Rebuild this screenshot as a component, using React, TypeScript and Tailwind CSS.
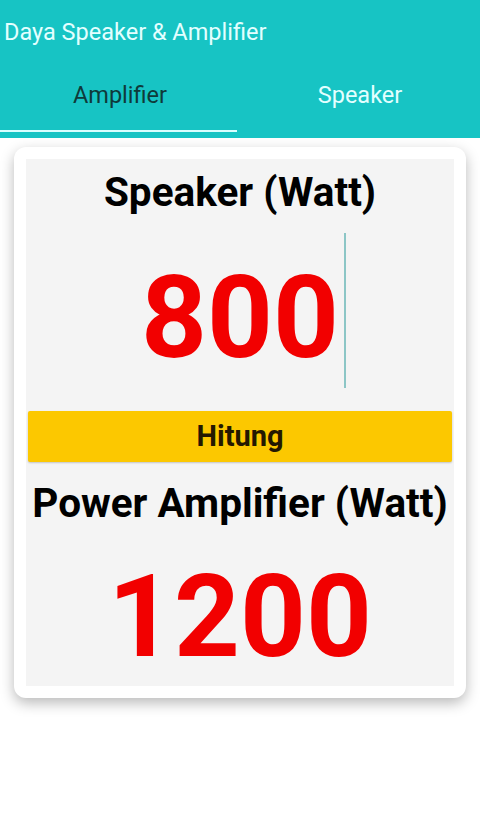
import { useState } from 'react'

const font = { fontFamily: 'Roboto, "Noto Sans", sans-serif' }

export default function App() {
  const [tab, setTab] = useState<'amp' | 'spk'>('amp')
  const [speaker] = useState('800')
  const result = String(Math.round(Number(speaker) * 1.5))

  return (
    <div className="min-h-[816px] w-[480px] bg-white" style={font}>
      <header className="h-[138px] bg-[#17c4c4]">
        <div className="flex h-[64px] items-center px-1 pt-[1px]">
          <h1 className="text-[23.5px] font-normal text-[#e3ffff]">Daya Speaker &amp; Amplifier</h1>
        </div>
        <nav className="flex h-[74px] flex-col">
          <div className="flex h-[66px]">
            <button type="button" onClick={() => setTab('amp')} className={`flex flex-1 items-center justify-center pb-[3px] text-[23.5px] ${tab === 'amp' ? 'text-[#0f3a3a]' : 'text-[#e3ffff]'}`}>
              Amplifier
            </button>
            <button type="button" onClick={() => setTab('spk')} className={`flex flex-1 items-center justify-center pb-[3px] text-[23.5px] ${tab === 'spk' ? 'text-[#0f3a3a]' : 'text-[#e3ffff]'}`}>
              Speaker
            </button>
          </div>
          <div className="flex">
            <div className={`h-[2px] w-[237px] ${tab === 'amp' ? 'bg-[#d9ffff]' : 'bg-transparent'}`} />
            <div className={`h-[2px] w-[237px] ${tab === 'spk' ? 'bg-[#d9ffff]' : 'bg-transparent'}`} />
          </div>
        </nav>
      </header>

      <main className="px-[14px] pt-[9px]">
        <div className="rounded-[12px] bg-white p-[12px] shadow-[0_5px_14px_rgba(0,0,0,0.28)]">
          <section className="flex h-[527px] flex-col items-center bg-[#f4f4f4] px-[2px]">
            <h2 className="mt-[11px] text-[40.5px] leading-[44px] font-bold text-black">Speaker (Watt)</h2>
            <div className="mt-[23px] flex h-[155px] items-center justify-center pt-[6px]">
              <span className="relative text-[115px] leading-[120px] font-bold text-[#f20000]">
                {speaker}
                <span className="absolute top-[-25px] left-[calc(100%+5px)] h-[155px] w-[2px] bg-[#8cc6c6]" />
              </span>
            </div>
            <button type="button" className="mt-[19px] h-[51px] w-full rounded-[2px] bg-[#fcc800] text-[29px] font-bold text-[#241800] shadow-[0_1px_2px_rgba(0,0,0,0.2)]">
              Hitung
            </button>
            <h2 className="mt-[19px] text-[40.5px] leading-[44px] font-bold text-black">Power Amplifier (Watt)</h2>
            <p className="mt-[32px] text-[115px] leading-[120px] font-bold text-[#f20000]">{result}</p>
          </section>
        </div>
      </main>
    </div>
  )
}
